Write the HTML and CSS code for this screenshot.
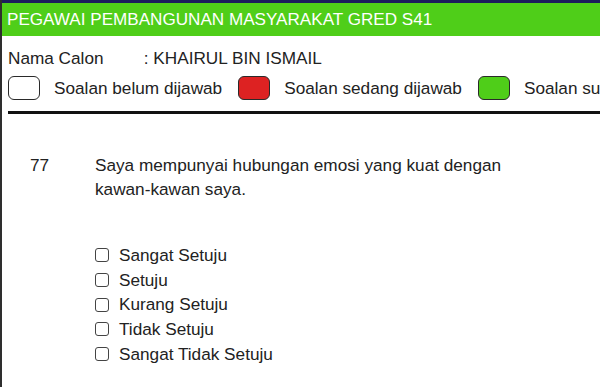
FILE: index.html
```html
<!DOCTYPE html>
<html>
<head>
<meta charset="utf-8">
<link rel="stylesheet" href="styles.css">
</head>
<body>
<div class="page">
  <div class="topbar"></div>
  <div class="header">PEGAWAI PEMBANGUNAN MASYARAKAT GRED S41</div>
  <div class="content">
    <div class="name-row">
      <span class="name-label">Nama Calon</span>
      <span class="name-value">: KHAIRUL BIN ISMAIL</span>
    </div>
    <div class="legend">
      <span class="box box-white"></span><span class="legend-text">Soalan belum dijawab</span>
      <span class="box box-red"></span><span class="legend-text">Soalan sedang dijawab</span>
      <span class="box box-green"></span><span class="legend-text">Soalan sudah dijawab</span>
    </div>
    <div class="rule"></div>
    <div class="question">
      <div class="qnum">77</div>
      <div class="qtext">Saya mempunyai hubungan emosi yang kuat dengan kawan-kawan saya.</div>
    </div>
    <ul class="options">
      <li><span class="chk"></span>Sangat Setuju</li>
      <li><span class="chk"></span>Setuju</li>
      <li><span class="chk"></span>Kurang Setuju</li>
      <li><span class="chk"></span>Tidak Setuju</li>
      <li><span class="chk"></span>Sangat Tidak Setuju</li>
    </ul>
  </div>
</div>
</body>
</html>
```

FILE: styles.css
```css
html, body {
  margin: 0;
  padding: 0;
  background: #ffffff;
}
body {
  font-family: "Liberation Sans", Arial, sans-serif;
  color: #222222;
  width: 600px;
  height: 387px;
  overflow: hidden;
}
.page {
  border-left: 2px solid #2e2e2e;
  height: 387px;
  box-sizing: border-box;
  overflow: hidden;
}
.topbar {
  height: 3px;
  background: #1c1c5c;
}
.header {
  height: 33px;
  background: #4fce19;
  color: #ffffff;
  font-size: 17.1px;
  line-height: 34px;
  padding-left: 5px;
  white-space: nowrap;
}
.content {
  padding-left: 6px;
}
.name-row {
  font-size: 17.2px;
  line-height: 20px;
  padding-top: 12px;
  white-space: nowrap;
}
.name-label {
  display: inline-block;
  width: 131px;
}
.legend {
  display: flex;
  align-items: center;
  margin-top: 8px;
  white-space: nowrap;
  font-size: 17.2px;
  overflow: hidden;
}
.box {
  flex: none;
  width: 30px;
  height: 22px;
  border: 1.5px solid #2a2a2a;
  border-radius: 6px;
}
.box-white { background: #ffffff; }
.box-red { background: #dd2222; }
.box-green { background: #4fce19; }
.legend-text {
  flex: none;
  margin-left: 14px;
  margin-right: 16px;
}
.rule {
  height: 3px;
  background: #111111;
  margin-top: 11px;
}
.question {
  display: flex;
  margin-top: 39px;
  font-size: 17.2px;
  line-height: 24px;
}
.qnum {
  width: 87px;
  padding-left: 22px;
  box-sizing: border-box;
  flex: none;
}
.qtext {
  width: 420px;
}
.options {
  list-style: none;
  margin: 42px 0 0 0;
  padding: 0 0 0 87px;
  font-size: 17.2px;
  line-height: 24.7px;
}
.options li {
  display: flex;
  align-items: center;
}
.chk {
  flex: none;
  width: 12px;
  height: 12px;
  border: 1.6px solid #444444;
  border-radius: 3px;
  margin-right: 10px;
}
```
